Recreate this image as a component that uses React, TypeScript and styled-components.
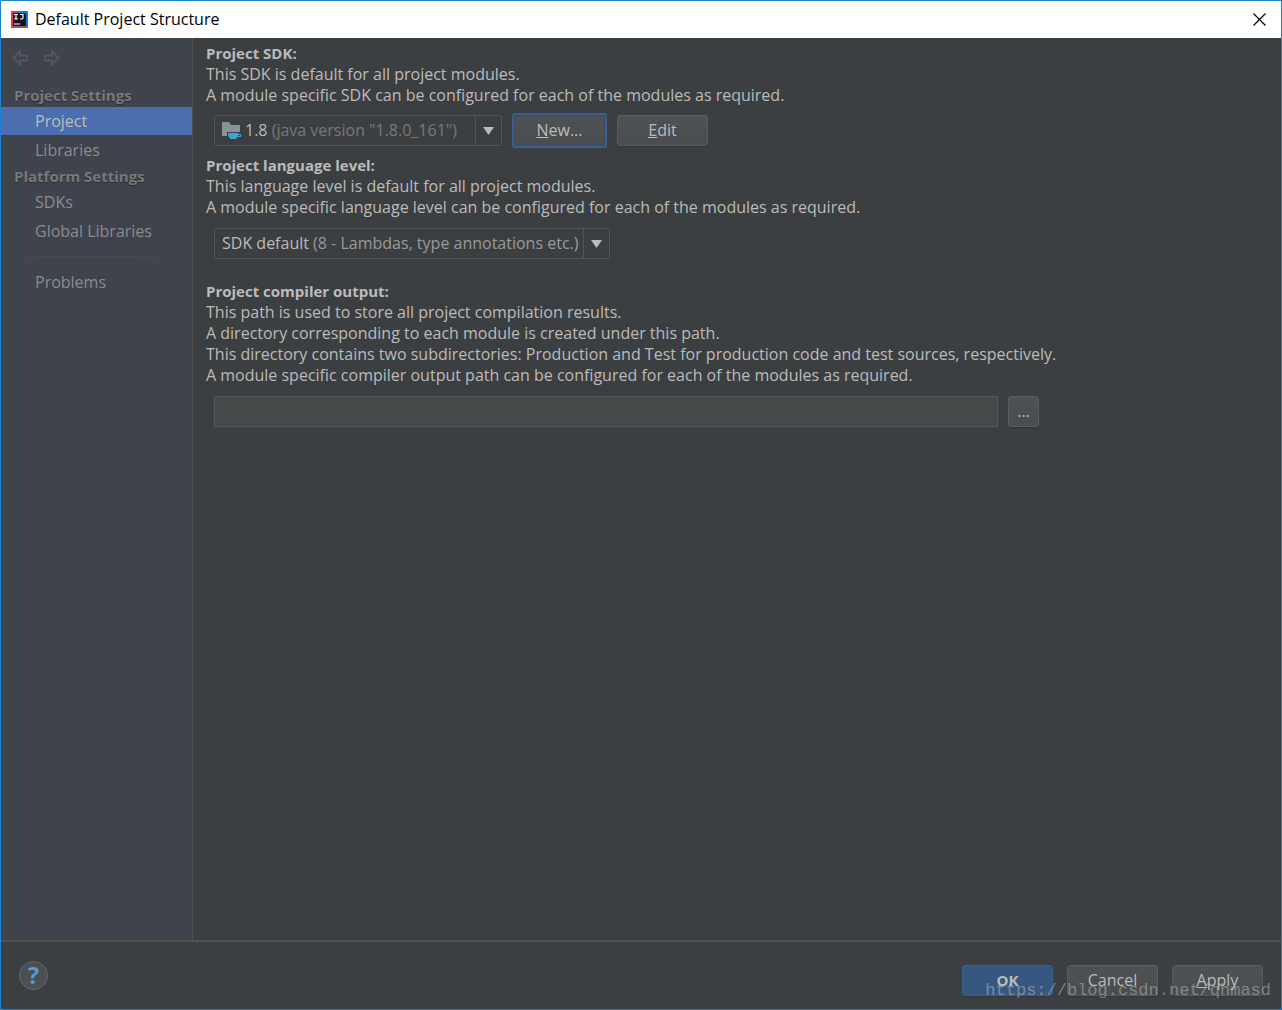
import React from "react";
import styled, { createGlobalStyle, css } from "styled-components";

const GlobalStyle = createGlobalStyle`
  *, *::before, *::after { box-sizing: border-box; }
  body {
    margin: 0;
    background: #3c3f41;
    font-family: "Open Sans", "Noto Sans", sans-serif;
    font-size: 16px;
    line-height: 21px;
    color: #bbbbbb;
  }
  button, input, select { font: inherit; }
`;

const Window = styled.div`
  position: relative;
  display: flex;
  flex-direction: column;
  min-height: 100vh;
  border: 1px solid #1883d7;
  background: #3c3f41;
`;

const TitleBar = styled.header`
  display: flex;
  align-items: center;
  gap: 7px;
  height: 37px;
  padding: 0 15px 0 10px;
  background: #ffffff;
  color: #000000;
`;

const Title = styled.h1`
  flex: 1;
  margin: 0;
  font-size: 16px;
  font-weight: 400;
`;

const IconButton = styled.button`
  display: flex;
  padding: 0;
  border: 0;
  background: none;
`;

const Body = styled.div`
  flex: 1;
  display: flex;
`;

const Sidebar = styled.nav`
  flex: none;
  width: 192px;
  padding-top: 11px;
  border-right: 1px solid #515151;
  background: #3e434c;
`;

const History = styled.div`
  display: flex;
  gap: 14px;
  height: 35px;
  padding-left: 11px;
  align-items: flex-start;
`;

const GroupTitle = styled.h2`
  margin: 0;
  padding-left: 13px;
  font-size: 15px;
  font-weight: 700;
  line-height: 23px;
  color: #787878;
  text-shadow: 0 1px 0 #2b2d30;
`;

const NavList = styled.ul`
  margin: 0;
  padding: 0;
  list-style: none;
`;

const NavItem = styled.li`
  padding-bottom: 1px;
`;

const NavLink = styled.a<{ $active?: boolean }>`
  display: block;
  padding-left: 34px;
  line-height: 28px;
  text-decoration: none;
  color: ${(p) => (p.$active ? "#bbbbbb" : "#8c8c8c")};
  background: ${(p) => (p.$active ? "#4b6eaf" : "transparent")};
`;

const Divider = styled.hr`
  height: 2px;
  margin: 10px 20px 10px 13px;
  border: 0;
  background: linear-gradient(90deg, #3e434c, #47494d 25%, #47494d 70%, #3e434c);
`;

const Content = styled.main`
  flex: 1;
  min-width: 0;
  padding: 5px 13px;
`;

const Section = styled.section<{ $gap: number }>`
  margin-bottom: ${(p) => p.$gap}px;
`;

const Heading = styled.h2`
  margin: 0;
  font-size: 15px;
  font-weight: 700;
  line-height: 21px;
`;

const Description = styled.p`
  margin: 0;
`;

const Controls = styled.div<{ $top: number }>`
  display: flex;
  align-items: center;
  gap: 10px;
  margin-top: ${(p) => p.$top}px;
  padding-left: 8px;
`;

const Combo = styled.div<{ $width: number }>`
  position: relative;
  display: flex;
  width: ${(p) => p.$width}px;
  height: 31px;
  border: 1px solid #515556;
  border-radius: 3px;
`;

const ComboText = styled.span`
  flex: 1;
  display: flex;
  align-items: center;
  gap: 3px;
  padding-left: 7px;
  white-space: nowrap;
`;

const Muted = styled.span<{ $dim?: boolean }>`
  color: ${(p) => (p.$dim ? "#787878" : "#999999")};
`;

const ComboArrow = styled.span`
  display: flex;
  align-items: center;
  justify-content: center;
  width: 26px;
  border-left: 1px solid #515556;
`;

const ComboSelect = styled.select`
  position: absolute;
  inset: 0;
  width: 100%;
  height: 100%;
  opacity: 0;
`;

const Button = styled.button<{ $kind?: "focused" | "primary" | "small" }>`
  width: 91px;
  height: 31px;
  padding: 0;
  border: 1px solid #5a5d5f;
  border-radius: 3px;
  background: linear-gradient(#4f5254, #4a4d50);
  box-shadow: 0 1px 1px #323435;
  color: #bbbbbb;
  ${(p) =>
    p.$kind === "focused" &&
    css`
      width: 95px;
      height: 35px;
      border: 2px solid #375f91;
      box-shadow: inset 0 0 0 1px #45494c;
    `}
  ${(p) =>
    p.$kind === "primary" &&
    css`
      border-color: #3d6185;
      background: #365880;
      font-size: 15px;
      font-weight: 700;
    `}
  ${(p) =>
    p.$kind === "small" &&
    css`
      width: 31px;
    `}
`;

const PathInput = styled.input`
  flex: 0 1 784px;
  min-width: 0;
  height: 31px;
  border: 1px solid #535758;
  background: #45494a;
  color: #bbbbbb;
`;

const Footer = styled.footer`
  display: flex;
  align-items: center;
  gap: 14px;
  height: 69px;
  padding: 9px 18px 0;
  border-top: 2px solid #515151;
`;

const HelpButton = styled.button`
  width: 29px;
  height: 29px;
  margin: 0 auto 9px 0;
  padding: 0;
  border: 1px solid #64686a;
  border-radius: 50%;
  background: #4c5052;
  color: #4f9fcf;
  font-size: 23px;
  font-weight: 700;
  line-height: 27px;
`;

const Watermark = styled.span`
  position: absolute;
  right: 10px;
  bottom: 8px;
  font-family: "Liberation Mono", monospace;
  font-size: 17px;
  color: rgba(190, 190, 180, 0.5);
  pointer-events: none;
`;

const AppIcon = () => (
  <svg width="17" height="17" viewBox="0 0 17 17" aria-hidden="true">
    <defs>
      <linearGradient id="badge" x1="0" y1="0" x2="1" y2="0">
        <stop offset="0" stopColor="#e8344f" />
        <stop offset="0.35" stopColor="#c9406e" />
        <stop offset="0.6" stopColor="#087cfa" />
      </linearGradient>
    </defs>
    <path d="M0 0H17V17H0Z" fill="url(#badge)" />
    <path d="M6 17L11 14H17V17Z" fill="#8a5a66" />
    <path d="M2 2H15V15H2Z" fill="#141414" />
    <path d="M3 3.5H7M5 3.5V8M3 8H7M9 3.5H12V7Q12 8 10.5 8H9M3 13H9" stroke="#fff" strokeWidth="1.2" fill="none" />
  </svg>
);

const CloseIcon = () => (
  <svg width="13" height="13" viewBox="0 0 13 13" aria-hidden="true">
    <path d="M0.5 0.5L12.5 12.5M12.5 0.5L0.5 12.5" stroke="#000" strokeWidth="1.2" />
  </svg>
);

const HistoryArrow = ({ forward }: { forward?: boolean }) => (
  <svg width="17" height="18" viewBox="0 0 17 18" aria-hidden="true">
    <path
      d={forward ? "M15.5 9L9 2.5V6.5H2V11.5H9V15.5Z" : "M1.5 9L8 2.5V6.5H15V11.5H8V15.5Z"}
      fill="none"
      stroke="#55565a"
      strokeWidth="2"
    />
  </svg>
);

const SdkIcon = () => (
  <svg width="20" height="19" viewBox="0 0 20 19" aria-hidden="true">
    <path d="M0 1H7L9 4H18V11H5V15H0Z" fill="#87939a" />
    <path d="M6 12H16V13H19V16H15.5L14 18H9Q6 17 6 12Z" fill="#3da4cd" />
    <path d="M16.5 14H18V15H16Z" fill="#3c3f41" />
  </svg>
);

const DownArrow = () => (
  <svg width="11" height="9" viewBox="0 0 11 9" aria-hidden="true">
    <path d="M0 1H11L5.5 9Z" fill="#bbbbbb" />
  </svg>
);

type ComboBoxProps = {
  label: string;
  width: number;
  value: string;
  detail: string;
  dim?: boolean;
  icon?: React.ReactNode;
};

const ComboBox = ({ label, width, value, detail, dim, icon }: ComboBoxProps) => (
  <Combo $width={width}>
    <ComboText aria-hidden="true">
      {icon}
      <span>
        {value} <Muted $dim={dim}>{detail}</Muted>
      </span>
    </ComboText>
    <ComboArrow>
      <DownArrow />
    </ComboArrow>
    <ComboSelect aria-label={label}>
      <option>{`${value} ${detail}`}</option>
    </ComboSelect>
  </Combo>
);

const NavGroup = ({ items, active }: { items: string[]; active?: string }) => (
  <NavList>
    {items.map((item) => (
      <NavItem key={item}>
        <NavLink href="#" $active={item === active} aria-current={item === active ? "page" : undefined}>
          {item}
        </NavLink>
      </NavItem>
    ))}
  </NavList>
);

export default function App() {
  return (
    <>
      <GlobalStyle />
      <Window>
        <TitleBar>
          <AppIcon />
          <Title>Default Project Structure</Title>
          <IconButton aria-label="Close">
            <CloseIcon />
          </IconButton>
        </TitleBar>
        <Body>
          <Sidebar>
            <History>
              <IconButton aria-label="Back">
                <HistoryArrow />
              </IconButton>
              <IconButton aria-label="Forward">
                <HistoryArrow forward />
              </IconButton>
            </History>
            <GroupTitle>Project Settings</GroupTitle>
            <NavGroup items={["Project", "Libraries"]} active="Project" />
            <GroupTitle>Platform Settings</GroupTitle>
            <NavGroup items={["SDKs", "Global Libraries"]} />
            <Divider />
            <NavGroup items={["Problems"]} />
          </Sidebar>
          <Content>
            <Section $gap={7}>
              <Heading>Project SDK:</Heading>
              <Description>This SDK is default for all project modules.</Description>
              <Description>A module specific SDK can be configured for each of the modules as required.</Description>
              <Controls $top={7}>
                <ComboBox
                  label="Project SDK"
                  width={288}
                  value="1.8"
                  detail={'(java version "1.8.0_161")'}
                  dim
                  icon={<SdkIcon />}
                />
                <Button $kind="focused">
                  <u>N</u>ew...
                </Button>
                <Button>
                  <u>E</u>dit
                </Button>
              </Controls>
            </Section>
            <Section $gap={22}>
              <Heading>Project language level:</Heading>
              <Description>This language level is default for all project modules.</Description>
              <Description>
                A module specific language level can be configured for each of the modules as required.
              </Description>
              <Controls $top={10}>
                <ComboBox
                  label="Project language level"
                  width={396}
                  value="SDK default"
                  detail="(8 - Lambdas, type annotations etc.)"
                />
              </Controls>
            </Section>
            <Section $gap={0}>
              <Heading>Project compiler output:</Heading>
              <Description>This path is used to store all project compilation results.</Description>
              <Description>A directory corresponding to each module is created under this path.</Description>
              <Description>
                This directory contains two subdirectories: Production and Test for production code and test sources,
                respectively.
              </Description>
              <Description>
                A module specific compiler output path can be configured for each of the modules as required.
              </Description>
              <Controls $top={10}>
                <PathInput aria-label="Project compiler output" />
                <Button $kind="small" aria-label="Browse">
                  ...
                </Button>
              </Controls>
            </Section>
          </Content>
        </Body>
        <Footer>
          <HelpButton aria-label="Help">?</HelpButton>
          <Button $kind="primary">OK</Button>
          <Button>Cancel</Button>
          <Button>
            <u>A</u>pply
          </Button>
        </Footer>
        <Watermark>https://blog.csdn.net/qhmasd</Watermark>
      </Window>
    </>
  );
}
